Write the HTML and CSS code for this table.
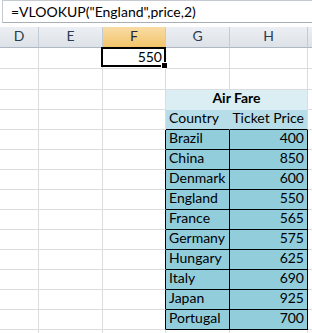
FILE: index.html
```html
<!DOCTYPE html>
<html>
<head>
  <title>Air Fare</title>
  <link rel="stylesheet" href="styles.css">
</head>
<body>
  <div class="formula-bar">=VLOOKUP("England",price,2)</div>

  <div class="sheet">
    <!-- column headers -->
    <div class="hd">D</div>
    <div class="hd">E</div>
    <div class="hd on">F</div>
    <div class="hd">G</div>
    <div class="hd">H</div>
    <div class="hd"></div>

    <!-- row 1 -->
    <div class="c"></div><div class="c"></div>
    <div class="c num sel">550</div>
    <div class="c"></div><div class="c"></div><div class="c"></div>

    <!-- row 2 -->
    <div class="c"></div><div class="c"></div><div class="c"></div>
    <div class="c"></div><div class="c"></div><div class="c"></div>

    <!-- price table -->
    <div class="c"></div><div class="c"></div><div class="c"></div>
    <div class="c title">Air Fare</div>
    <div class="c"></div>

    <div class="c"></div><div class="c"></div><div class="c"></div>
    <div class="c head first">Country</div>
    <div class="c head num">Ticket Price</div>
    <div class="c"></div>

    <div class="c"></div><div class="c"></div><div class="c edge"></div>
    <div class="c data">Brazil</div><div class="c data num">400</div><div class="c"></div>

    <div class="c"></div><div class="c"></div><div class="c edge"></div>
    <div class="c data">China</div><div class="c data num">850</div><div class="c"></div>

    <div class="c"></div><div class="c"></div><div class="c edge"></div>
    <div class="c data">Denmark</div><div class="c data num">600</div><div class="c"></div>

    <div class="c"></div><div class="c"></div><div class="c edge"></div>
    <div class="c data">England</div><div class="c data num">550</div><div class="c"></div>

    <div class="c"></div><div class="c"></div><div class="c edge"></div>
    <div class="c data">France</div><div class="c data num">565</div><div class="c"></div>

    <div class="c"></div><div class="c"></div><div class="c edge"></div>
    <div class="c data">Germany</div><div class="c data num">575</div><div class="c"></div>

    <div class="c"></div><div class="c"></div><div class="c edge"></div>
    <div class="c data">Hungary</div><div class="c data num">625</div><div class="c"></div>

    <div class="c"></div><div class="c"></div><div class="c edge"></div>
    <div class="c data">Italy</div><div class="c data num">690</div><div class="c"></div>

    <div class="c"></div><div class="c"></div><div class="c edge"></div>
    <div class="c data">Japan</div><div class="c data num">925</div><div class="c"></div>

    <div class="c"></div><div class="c"></div><div class="c edge"></div>
    <div class="c data">Portugal</div><div class="c data num">700</div><div class="c"></div>

    <div class="c"></div><div class="c"></div><div class="c"></div>
    <div class="c"></div><div class="c"></div><div class="c"></div>
  </div>
</body>
</html>
```

FILE: styles.css
```css
body {
  margin: 0;
  width: 312px;
  height: 333px;
  overflow: hidden;
  background: #fff;
  font-family: Lato, "Liberation Sans", sans-serif;
  font-size: 14px;
  color: #000;
}

.formula-bar {
  box-sizing: border-box;
  height: 23px;
  margin: 0 0 4px 2px;
  padding: 2px 0 0 8px;
  border-top: 1px solid #c5cad1;
  border-left: 1px solid #c5cad1;
  border-bottom: 1px solid #a9afb7;
  line-height: 18px;
  white-space: nowrap;
}

.sheet {
  display: grid;
  grid-template-columns: 39px 64px 63px 64px 78px 1fr;
  grid-template-rows: 21px 21px 21px repeat(12, 20px) 3px;
}

.hd {
  box-sizing: border-box;
  display: flex;
  align-items: flex-end;
  justify-content: center;
  padding-bottom: 3px;
  line-height: 16px;
  background: linear-gradient(#eceff3, #dde2e8);
  border-right: 1px solid #c3cbd4;
  border-bottom: 1px solid #aeb7c2;
  color: #2c3b4f;
}

.hd.on {
  background: linear-gradient(#f9dca6, #f1c46a);
  border-bottom-color: #e2a73b;
  color: #1f2a38;
}

.c {
  box-sizing: border-box;
  position: relative;
  display: flex;
  align-items: flex-end;
  padding: 0 3px 3px 3px;
  line-height: 16px;
  white-space: nowrap;
  border-right: 1px solid #dadcdd;
  border-bottom: 1px solid #dadcdd;
}

.num {
  justify-content: flex-end;
}

/* active cell frame with the fill handle */
.sel::before {
  content: "";
  position: absolute;
  top: -1px;
  left: -2px;
  right: -1px;
  bottom: 1px;
  border: 2px solid #000;
}

.sel::after {
  content: "";
  position: absolute;
  right: -3px;
  bottom: -1px;
  width: 5px;
  height: 5px;
  background: #000;
  border: 1px solid #fff;
}

.title {
  grid-column: span 2;
  justify-content: center;
  font-weight: bold;
  background: #daeef3;
  border-bottom-color: transparent;
}

.head {
  background: #b7dee8;
  border-bottom-color: #000;
}

.head.first {
  border-right-color: transparent;
}

.edge {
  border-right-color: #000;
}

.data {
  background: #92cddc;
  border-right-color: #000;
  border-bottom-color: #000;
}
```
